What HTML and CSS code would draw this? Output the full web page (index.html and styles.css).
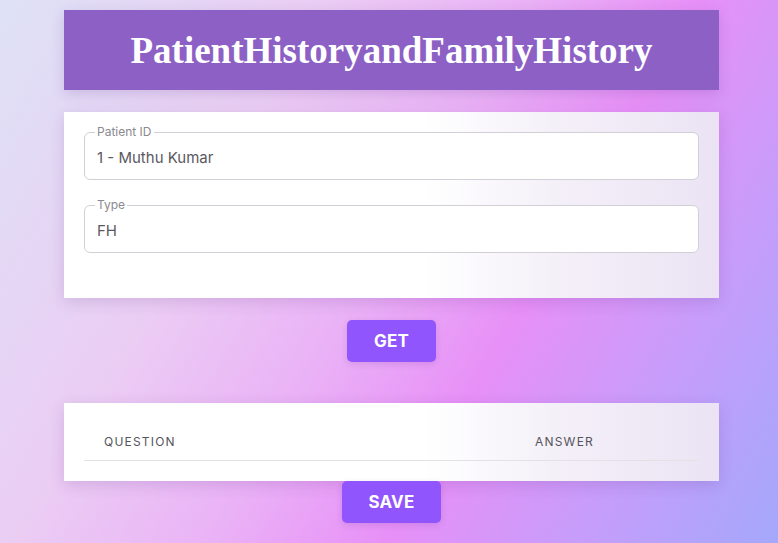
FILE: index.html
```html
<!DOCTYPE html>
<html lang="en">
<head>
<meta charset="utf-8">
<title>Patient History and Family History</title>
<link rel="stylesheet" href="styles.css">
</head>
<body>
<main class="page">
  <header class="banner">
    <h1 class="banner-title">PatientHistoryandFamilyHistory</h1>
  </header>

  <section class="card form-card">
    <div class="field">
      <span class="field-label">Patient ID</span>
      <span class="field-value">1 - Muthu Kumar</span>
    </div>
    <div class="field">
      <span class="field-label">Type</span>
      <span class="field-value">FH</span>
    </div>
  </section>

  <div class="actions actions-get">
    <button class="btn btn-get" type="button">GET</button>
  </div>

  <section class="card table-card">
    <table class="qa-table">
      <thead>
        <tr>
          <th class="col-question">Question</th>
          <th class="col-answer">Answer</th>
        </tr>
      </thead>
    </table>
  </section>

  <div class="actions">
    <button class="btn btn-save" type="button">SAVE</button>
  </div>
</main>
</body>
</html>
```

FILE: styles.css
```css
* { box-sizing: border-box; }

html, body {
  margin: 0;
  height: 100%;
}

body {
  font-family: Inter, "Noto Sans", sans-serif;
  background: linear-gradient(120deg, #dee2f6 0%, #ebcdf4 30%, #eab2f6 48%, #e790f7 64%, #c99cfa 80%, #a4a8fb 100%);
  overflow: hidden;
}

.page {
  width: 655px;
  margin-left: 64px;
  padding-top: 10px;
  display: flex;
  flex-direction: column;
}

.banner {
  height: 80px;
  background: #8c60c5;
  display: flex;
  align-items: center;
  justify-content: center;
  box-shadow: 0 4px 12px rgba(90, 50, 140, 0.18);
}

.banner-title {
  margin: 0;
  color: #ffffff;
  font-family: "Liberation Serif", "Times New Roman", serif;
  font-weight: 700;
  font-size: 37px;
  line-height: 1;
}

.card {
  background: linear-gradient(90deg, #ffffff 0%, #ffffff 55%, #f4f0f8 75%, #ebe3f4 100%);
  box-shadow: 0 4px 14px rgba(80, 40, 120, 0.16);
}

.form-card {
  margin-top: 22px;
  padding: 20px 20px 45px;
  display: flex;
  flex-direction: column;
  gap: 25px;
}

.field {
  position: relative;
  height: 48px;
  border: 1px solid #d2d0d6;
  border-radius: 6px;
  background: #ffffff;
  display: flex;
  align-items: center;
  padding: 0 12px;
}

.field-label {
  position: absolute;
  top: -8px;
  left: 10px;
  padding: 0 2px;
  background: #ffffff;
  font-size: 12px;
  line-height: 14px;
  color: #8b8a90;
}

.field-value {
  font-size: 15px;
  color: #5a5960;
  padding-top: 2px;
}

.actions {
  display: flex;
  justify-content: center;
}

.actions-get {
  margin-top: 22px;
  margin-bottom: 41px;
}

.btn {
  height: 42px;
  padding: 0 26px;
  border: none;
  border-radius: 5px;
  background: #9155fd;
  color: #ffffff;
  font-family: Inter, "Noto Sans", sans-serif;
  font-weight: 700;
  font-size: 17px;
  letter-spacing: 0.2px;
  box-shadow: 0 2px 6px rgba(80, 40, 140, 0.15);
}

.btn-get { width: 89px; }
.btn-save { width: 99px; }

.table-card {
  padding: 20px 20px 20px;
}

.qa-table {
  width: 100%;
  border-collapse: collapse;
}

.qa-table th {
  height: 37px;
  text-align: left;
  font-size: 12px;
  font-weight: 400;
  letter-spacing: 1.2px;
  text-transform: uppercase;
  color: #55545b;
  border-bottom: 1px solid #e3e1e6;
  padding: 0 20px;
}

.col-question { width: 431px; }
```
